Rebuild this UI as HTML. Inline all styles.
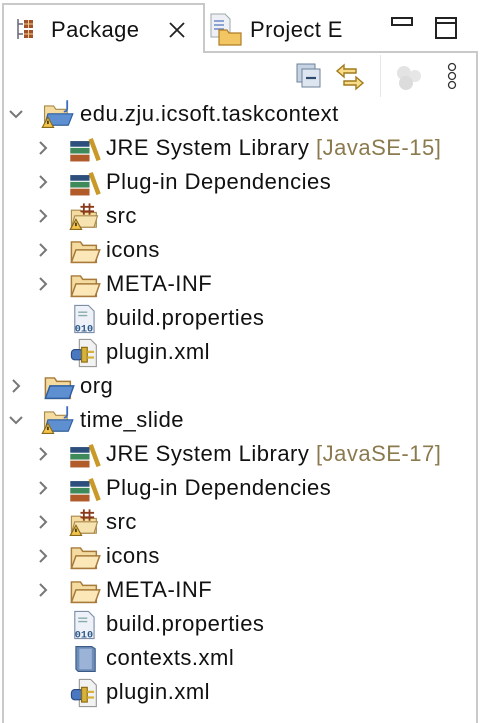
<!DOCTYPE html>
<html><head><meta charset="utf-8"><style>
*{margin:0;padding:0;box-sizing:border-box}
body{width:480px;height:712px;background:#fff;position:relative;overflow:hidden;font-family:"Liberation Sans",Arial,sans-serif;color:#111}
.frame{position:absolute;left:2px;top:3px;width:476px;height:720px;border:2px solid #c9c9c9;border-bottom:none}
.tab2{position:absolute;left:203px;top:3px;width:275px;height:50px;border:2px solid #c9c9c9;border-top:none;border-right:none;background:#fff}
.t{position:absolute;font-size:22px;line-height:24px;white-space:nowrap;letter-spacing:0.4px}
.row{position:absolute;height:34px;left:0;width:480px}
.row .chev{position:absolute;top:9px}
.row svg.ic{position:absolute;top:2px}
.row .lbl{position:absolute;top:5px;font-size:22px;line-height:24px;white-space:nowrap;letter-spacing:0.5px}
.dec{color:#8b7a4e}
</style></head><body>
<div class="frame"></div>
<div class="tab2"></div>
<svg style="position:absolute;left:16px;top:18px" width="22" height="22" viewBox="0 0 22 22"><path d="M2 1v20M2 6h5M2 16h5" stroke="#667" stroke-width="1.5" fill="none"/><rect x="8" y="2" width="9" height="8" fill="#a0522d"/><rect x="8" y="12" width="9" height="8" fill="#a0522d"/><path d="M12.5 2v8M8 6h9M12.5 12v8M8 16h9" stroke="#f3d08a" stroke-width="1"/></svg>
<div class="t" style="left:51px;top:18px">Package</div>
<svg style="position:absolute;left:168px;top:21px" width="18" height="18"><path d="M2 2L16 16M16 2L2 16" stroke="#222" stroke-width="1.8"/></svg>
<svg style="position:absolute;left:209px;top:12px" width="34" height="34" viewBox="0 0 34 34"><path d="M2 2h14l5 5v18H2z" fill="#eef0f6" stroke="#9aa" stroke-width="1"/><path d="M5 9h10M5 13h10M5 17h10" stroke="#6a8ac8" stroke-width="1.5"/><path d="M10 18h8l2 3h12v12H10z" fill="#f2c763" stroke="#b07c24" stroke-width="1.2"/></svg>
<div class="t" style="left:250px;top:18px">Project E</div>
<svg style="position:absolute;left:390px;top:16px" width="26" height="14"><rect x="2" y="2" width="20" height="7" fill="none" stroke="#222" stroke-width="2"/></svg>
<svg style="position:absolute;left:434px;top:16px" width="26" height="26"><rect x="2" y="2" width="20" height="20" fill="none" stroke="#222" stroke-width="2"/><path d="M2 7h20" stroke="#222" stroke-width="2"/></svg>
<svg style="position:absolute;left:296px;top:63px" width="28" height="28"><rect x="1" y="1" width="18" height="18" fill="#c6d3e3" stroke="#6e8198"/><rect x="6" y="6" width="18" height="18" fill="#dde6f0" stroke="#6e8198"/><path d="M10 15h10" stroke="#2f4a6c" stroke-width="2.2"/></svg>
<svg style="position:absolute;left:334px;top:62px" width="32" height="32"><path d="M10 3L3 9l7 6v-4h12V7H10z" fill="#f8dc8a" stroke="#a07a1c" stroke-width="1.4"/><path d="M22 15l7 6-7 6v-4H10v-4h12z" fill="#f8dc8a" stroke="#a07a1c" stroke-width="1.4"/></svg>
<div style="position:absolute;left:380px;top:55px;width:1px;height:42px;background:#e6e6e6"></div>
<svg style="position:absolute;left:394px;top:64px" width="32" height="28"><circle cx="10" cy="9" r="7" fill="#e3e3e3"/><circle cx="21" cy="12" r="6" fill="#e6e6e6"/><circle cx="12" cy="19" r="7" fill="#dcdcdc"/></svg>
<svg style="position:absolute;left:445px;top:62px" width="14" height="30"><circle cx="7" cy="5" r="3.5" fill="none" stroke="#333" stroke-width="1.3"/><circle cx="7" cy="14" r="3.5" fill="none" stroke="#333" stroke-width="1.3"/><circle cx="7" cy="23" r="3.5" fill="none" stroke="#333" stroke-width="1.3"/></svg>

<svg width="0" height="0" style="position:absolute">
<defs>
<symbol id="chr" viewBox="0 0 16 16"><path d="M5 2l6 6-6 6" fill="none" stroke="#777" stroke-width="2"/></symbol>
<symbol id="chd" viewBox="0 0 16 16"><path d="M2 5l6 6 6-6" fill="none" stroke="#777" stroke-width="2"/></symbol>
<symbol id="proj" viewBox="0 0 30 28"><path d="M4 6h8l2 3h10v14H4z" fill="#f4dba0" stroke="#a88a4a"/><path d="M7 13h22l-4 10H4z" fill="#5e8fd0" stroke="#2d5ea0"/><path d="M24 1v7q0 3-3 3" fill="none" stroke="#3b6cc0" stroke-width="1.6"/><path d="M7 16l5 9H2z" fill="#f3c44a" stroke="#8a6a1a"/><path d="M7 19v3" stroke="#222" stroke-width="1.3"/></symbol>
<symbol id="lib" viewBox="0 0 30 28"><rect x="2" y="7" width="17" height="5" fill="#2c4f7c"/><rect x="2" y="13" width="17" height="5" fill="#3f8a5a"/><rect x="2" y="19" width="17" height="6" fill="#b25b2a"/><path d="M20 5l7 19" stroke="#c99a2a" stroke-width="4"/></symbol>
<symbol id="src" viewBox="0 0 30 28"><path d="M3 8h8l2 2h12v13H3z" fill="#f4dba0" stroke="#a88a4a"/><path d="M6 13h20l-3 10H3z" fill="#f7e3b0" stroke="#a88a4a"/><path d="M14 2v10M19 2v10M11 5h12M11 9h12" stroke="#8a3a1a" stroke-width="1.6"/><path d="M7 16l5 9H2z" fill="#f3c44a" stroke="#8a6a1a"/><path d="M7 19v3" stroke="#222" stroke-width="1.3"/></symbol>
<symbol id="fold" viewBox="0 0 30 28"><path d="M3 6h8l2 3h12v15H3z" fill="#f4dba0" stroke="#a87a3a" stroke-width="1.3"/><path d="M7 13h21l-4 11H3z" fill="#fbe7b8" stroke="#a87a3a" stroke-width="1.3"/></symbol>
<symbol id="pkgf" viewBox="0 0 30 28"><path d="M3 6h8l2 3h12v15H3z" fill="#f4dba0" stroke="#a87a3a" stroke-width="1.3"/><path d="M7 13h21l-4 11H3z" fill="#5e8fd0" stroke="#2d5ea0" stroke-width="1.3"/></symbol>
<symbol id="bin" viewBox="0 0 30 28"><path d="M6 2h12l5 5v19H6z" fill="#eef2f8" stroke="#7d8ea8"/><path d="M9 8h8M9 11h8" stroke="#8aa" stroke-width="1.2"/><text x="6" y="25" font-size="9" font-family="Liberation Mono" fill="#2d5a8a" font-weight="bold">010</text></symbol>
<symbol id="xml" viewBox="0 0 30 28"><path d="M10 2h10l5 5v19H10z" fill="#f2f2f2" stroke="#999"/><rect x="3" y="11" width="10" height="9" rx="3" fill="#4a78c0" stroke="#2a4a80"/><rect x="12" y="9" width="5" height="13" fill="#d6b23a" stroke="#8a6a10"/><path d="M17 13h6M17 18h6" stroke="#d6b23a" stroke-width="2"/></symbol>
<symbol id="ctx" viewBox="0 0 30 28"><path d="M7 3h14l3 2v20H9l-2-2z" fill="#6f8db8" stroke="#3a5a88"/><path d="M10 5h11v18H10z" fill="#9ab3d6"/></symbol>
</defs></svg>

<div class="row" style="top:97px"><svg class="chev" style="left:8px" width="16" height="16"><use href="#chd"/></svg><svg class="ic" style="left:40px" width="34" height="32"><use href="#proj"/></svg><span class="lbl" style="left:80px">edu.zju.icsoft.taskcontext</span></div>
<div class="row" style="top:131px"><svg class="chev" style="left:35px" width="16" height="16"><use href="#chr"/></svg><svg class="ic" style="left:68px" width="34" height="32"><use href="#lib"/></svg><span class="lbl" style="left:106px">JRE System Library <span class="dec">[JavaSE-15]</span></span></div>
<div class="row" style="top:165px"><svg class="chev" style="left:35px" width="16" height="16"><use href="#chr"/></svg><svg class="ic" style="left:68px" width="34" height="32"><use href="#lib"/></svg><span class="lbl" style="left:106px">Plug-in Dependencies</span></div>
<div class="row" style="top:199px"><svg class="chev" style="left:35px" width="16" height="16"><use href="#chr"/></svg><svg class="ic" style="left:68px" width="34" height="32"><use href="#src"/></svg><span class="lbl" style="left:106px">src</span></div>
<div class="row" style="top:233px"><svg class="chev" style="left:35px" width="16" height="16"><use href="#chr"/></svg><svg class="ic" style="left:68px" width="34" height="32"><use href="#fold"/></svg><span class="lbl" style="left:106px">icons</span></div>
<div class="row" style="top:267px"><svg class="chev" style="left:35px" width="16" height="16"><use href="#chr"/></svg><svg class="ic" style="left:68px" width="34" height="32"><use href="#fold"/></svg><span class="lbl" style="left:106px">META-INF</span></div>
<div class="row" style="top:301px"><svg class="ic" style="left:68px" width="34" height="32"><use href="#bin"/></svg><span class="lbl" style="left:106px">build.properties</span></div>
<div class="row" style="top:335px"><svg class="ic" style="left:68px" width="34" height="32"><use href="#xml"/></svg><span class="lbl" style="left:106px">plugin.xml</span></div>
<div class="row" style="top:369px"><svg class="chev" style="left:8px" width="16" height="16"><use href="#chr"/></svg><svg class="ic" style="left:42px" width="34" height="32"><use href="#pkgf"/></svg><span class="lbl" style="left:80px">org</span></div>
<div class="row" style="top:403px"><svg class="chev" style="left:8px" width="16" height="16"><use href="#chd"/></svg><svg class="ic" style="left:40px" width="34" height="32"><use href="#proj"/></svg><span class="lbl" style="left:80px">time_slide</span></div>
<div class="row" style="top:437px"><svg class="chev" style="left:35px" width="16" height="16"><use href="#chr"/></svg><svg class="ic" style="left:68px" width="34" height="32"><use href="#lib"/></svg><span class="lbl" style="left:106px">JRE System Library <span class="dec">[JavaSE-17]</span></span></div>
<div class="row" style="top:471px"><svg class="chev" style="left:35px" width="16" height="16"><use href="#chr"/></svg><svg class="ic" style="left:68px" width="34" height="32"><use href="#lib"/></svg><span class="lbl" style="left:106px">Plug-in Dependencies</span></div>
<div class="row" style="top:505px"><svg class="chev" style="left:35px" width="16" height="16"><use href="#chr"/></svg><svg class="ic" style="left:68px" width="34" height="32"><use href="#src"/></svg><span class="lbl" style="left:106px">src</span></div>
<div class="row" style="top:539px"><svg class="chev" style="left:35px" width="16" height="16"><use href="#chr"/></svg><svg class="ic" style="left:68px" width="34" height="32"><use href="#fold"/></svg><span class="lbl" style="left:106px">icons</span></div>
<div class="row" style="top:573px"><svg class="chev" style="left:35px" width="16" height="16"><use href="#chr"/></svg><svg class="ic" style="left:68px" width="34" height="32"><use href="#fold"/></svg><span class="lbl" style="left:106px">META-INF</span></div>
<div class="row" style="top:607px"><svg class="ic" style="left:68px" width="34" height="32"><use href="#bin"/></svg><span class="lbl" style="left:106px">build.properties</span></div>
<div class="row" style="top:641px"><svg class="ic" style="left:68px" width="34" height="32"><use href="#ctx"/></svg><span class="lbl" style="left:106px">contexts.xml</span></div>
<div class="row" style="top:675px"><svg class="ic" style="left:68px" width="34" height="32"><use href="#xml"/></svg><span class="lbl" style="left:106px">plugin.xml</span></div>
</body></html>
